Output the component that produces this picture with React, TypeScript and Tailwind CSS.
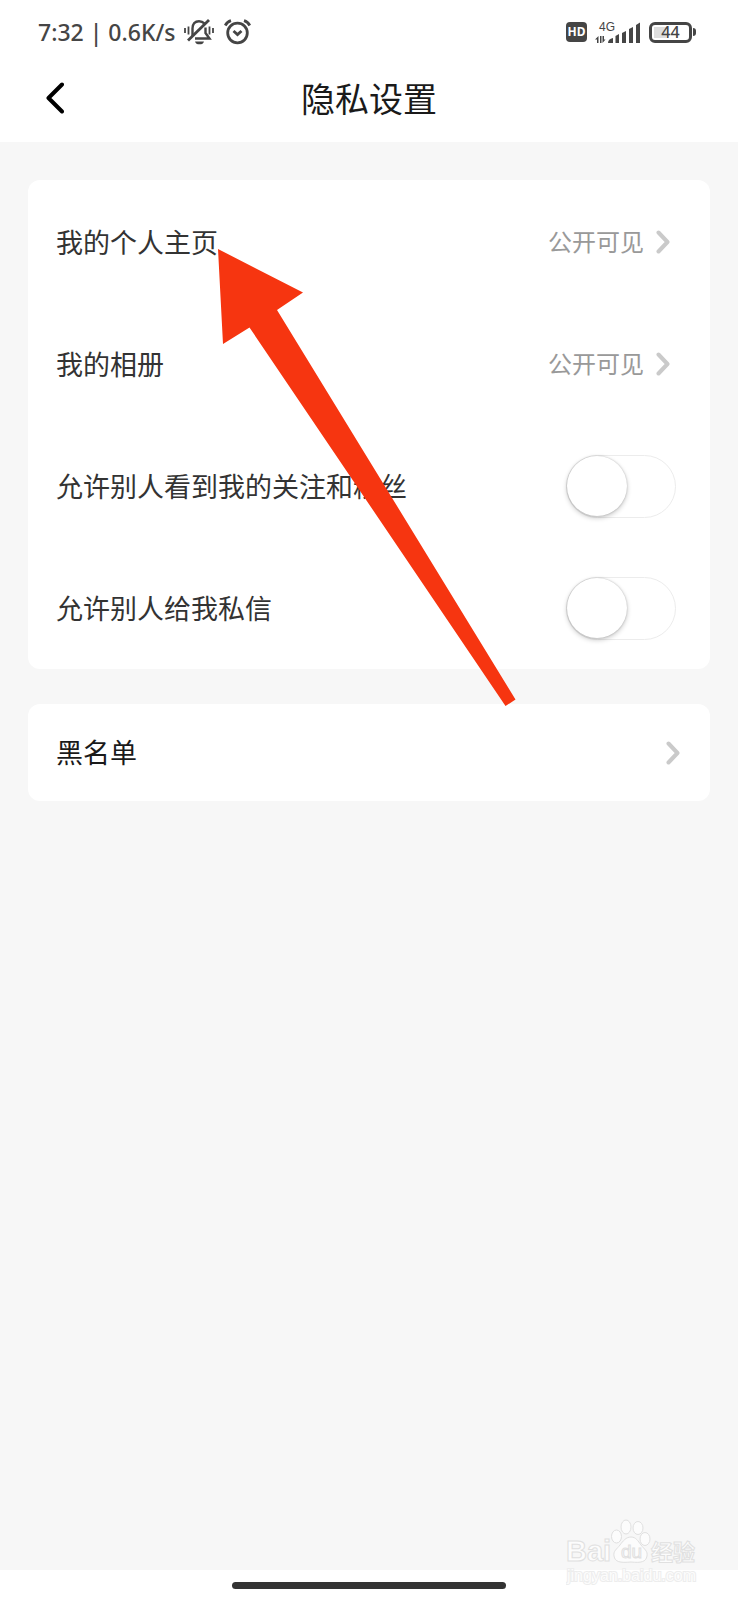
import React, { useState } from "react";

interface LinkRowProps {
  label: string;
  value: string;
}

interface SwitchRowProps {
  id: string;
  label: string;
}

const Chevron = () => (
  <svg width="14" height="24" viewBox="0 0 14 24" fill="none" aria-hidden="true">
    <path
      d="M2.500 2.500L11.500 12L2.500 21.500"
      stroke="#cacaca"
      strokeWidth="4"
      strokeLinecap="round"
      strokeLinejoin="round"
    />
  </svg>
);

const MutedBell = () => (
  <svg width="30" height="26" viewBox="0 0 30 26" fill="none" aria-hidden="true">
    <g stroke="#454545" strokeWidth="2.400">
      <path d="M1 9v5M4.500 7.500v8M25.500 7.500v8M29 9v5" strokeWidth="1.800" />
      <path d="M8.500 17V9.500C8.500 5 11 2.200 15 2.200c2.200 0 4 .8 5.300 2.200M21.500 8.500V14l4 5.500H11" />
      <path d="M25 1L4 21.500" strokeWidth="2.800" />
    </g>
    <path d="M11 22.500h9a4.600 3.600 0 0 1-9 0z" fill="#454545" />
  </svg>
);

const Alarm = () => (
  <svg width="27" height="26" viewBox="0 0 27 26" fill="none" aria-hidden="true">
    <circle cx="13.500" cy="14" r="9.800" stroke="#454545" strokeWidth="2.800" />
    <path
      d="M1.200 6.500Q3.200 2.800 7 1.600M25.800 6.500Q23.800 2.800 20 1.600"
      stroke="#454545"
      strokeWidth="2.800"
    />
    <path d="M9.500 12l4 3.600 4-3.600" stroke="#454545" strokeWidth="2.800" />
  </svg>
);

const Signal = () => (
  <svg width="46" height="28" viewBox="0 0 46 28" fill="#454545" aria-hidden="true">
    <text x="4" y="13" fontSize="12" fontWeight="500" fontFamily="Liberation Sans, sans-serif">
      4G
    </text>
    <path d="M0 21.500L3.500 18v7H2v-3.500zM5 18h1.500v7H5zM7.500 18H9v3.500h1.500L7.500 25z" />
    <path d="M13 25q0-4 5-5v5zM20.500 25v-7l3.500-2v9zM27 25V15l4-2v12zM34 25V11l4-2v16zM41 25V7l4-2.500V25z" />
  </svg>
);

const StatusBar = () => (
  <div className="flex h-14 items-center justify-between pt-2 pr-[42px] pl-[38px] text-[#454545]">
    <div className="flex items-center">
      <span className="text-[23px] leading-6 font-medium">7:32 | 0.6K/s</span>
      <span className="ml-2 flex gap-2.5">
        <MutedBell />
        <Alarm />
      </span>
    </div>
    <div className="flex items-center gap-2">
      <span className="flex h-5 w-[21px] items-center justify-center rounded bg-[#454545] text-[12px] font-bold text-white">
        HD
      </span>
      <Signal />
      <div className="flex items-center gap-px">
        <span className="relative flex h-[21px] w-[43px] items-center justify-center rounded-md border-[3px] border-[#454545] text-[16px] font-medium">
          <span className="absolute inset-y-0.5 left-0.5 w-3 bg-[#dedede]" />
          <span className="relative">44</span>
        </span>
        <span className="h-2 w-[3px] rounded-r-sm bg-[#454545]" />
      </div>
    </div>
  </div>
);

const LinkRow = ({ label, value }: LinkRowProps) => (
  <button
    type="button"
    className="flex h-[122px] w-full items-center justify-between pr-10 pl-7 text-left"
  >
    <span className="pt-0.5 text-[27px] text-[#333333]">{label}</span>
    <span className="flex items-center gap-3">
      <span className="text-[24px] text-[#999999]">{value}</span>
      <Chevron />
    </span>
  </button>
);

const SwitchRow = ({ id, label }: SwitchRowProps) => {
  const [checked, setChecked] = useState(false);

  return (
    <div className="flex h-[122px] items-center justify-between pr-[34px] pl-7">
      <label htmlFor={id} className="pt-0.5 text-[27px] text-[#333333]">
        {label}
      </label>
      <input
        id={id}
        type="checkbox"
        role="switch"
        checked={checked}
        onChange={(e) => setChecked(e.target.checked)}
        className="flex h-[63px] w-[110px] shrink-0 appearance-none items-center rounded-full border border-[#ececec] bg-white before:size-[60px] before:rounded-full before:bg-white before:shadow-[0_2px_5px_rgba(0,0,0,0.22),0_0_2px_rgba(0,0,0,0.22)] checked:justify-end checked:bg-green-500"
      />
    </div>
  );
};

const Pointer = () => (
  <svg
    width="300"
    height="460"
    viewBox="217 248 300 460"
    className="pointer-events-none absolute top-[248px] left-[217px]"
    aria-hidden="true"
  >
    <path
      d="M218 249L303 292.500L277 310L515.500 699.500L505.500 706L249.500 327.500L223 344Z"
      fill="#f63510"
    />
  </svg>
);

const Watermark = () => (
  <svg
    width="136"
    height="68"
    viewBox="0 0 136 68"
    className="pointer-events-none absolute right-9 bottom-[14px]"
    fill="#fcfcfc"
    stroke="#e0e0e0"
    strokeWidth="1"
    aria-hidden="true"
  >
    <g fontFamily="Liberation Sans, Noto Sans CJK SC, sans-serif" fontWeight="700">
      <text x="0" y="43" fontSize="29">
        Bai
      </text>
      <text x="85" y="42" fontSize="22">
        经验
      </text>
    </g>
    <ellipse cx="50.500" cy="18.500" rx="5" ry="6.500" />
    <ellipse cx="60" cy="9" rx="5" ry="7" />
    <ellipse cx="72" cy="10" rx="5" ry="6.500" />
    <ellipse cx="79" cy="21" rx="5" ry="6.500" />
    <path d="M65 19c5 0 7 4 10 8s7 6 6 11c-1 6-6 7-16 6-11 1-16 0-17-6-1-5 3-7 6-11s6-8 11-8z" />
    <text x="55" y="40" fontSize="19" fontFamily="Liberation Sans, sans-serif">
      du
    </text>
    <text
      x="1"
      y="63"
      fontSize="16"
      fontFamily="Liberation Sans, sans-serif"
      strokeWidth="2"
      stroke="#ededed"
      paintOrder="stroke"
    >
      jingyan.baidu.com
    </text>
  </svg>
);

const App = () => {
  return (
    <div
      lang="zh-CN"
      className="relative flex min-h-screen flex-col bg-white font-['Noto_Sans','Noto_Sans_CJK_SC',sans-serif]"
    >
      <header>
        <StatusBar />
        <div className="grid h-[86px] grid-cols-[80px_1fr_80px] items-center">
          <button type="button" aria-label="返回" className="flex pb-0.5 pl-11">
            <svg width="20" height="32" viewBox="0 0 20 32" fill="none" aria-hidden="true">
              <path
                d="M18 2.500L4.500 16L18 29.500"
                stroke="#000000"
                strokeWidth="4"
                strokeLinecap="round"
                strokeLinejoin="round"
              />
            </svg>
          </button>
          <h1 className="text-center text-[34px] text-[#1a1a1a]">隐私设置</h1>
        </div>
      </header>

      <main className="flex flex-1 flex-col gap-[35px] bg-[#f7f7f7] px-7 pt-[38px]">
        <section className="rounded-xl bg-white pt-px">
          <LinkRow label="我的个人主页" value="公开可见" />
          <LinkRow label="我的相册" value="公开可见" />
          <SwitchRow id="show-follows" label="允许别人看到我的关注和粉丝" />
          <SwitchRow id="allow-messages" label="允许别人给我私信" />
        </section>
        <section className="rounded-xl bg-white">
          <button
            type="button"
            className="flex h-[97px] w-full items-center justify-between pr-[30px] pl-7 text-left"
          >
            <span className="pt-0.5 text-[27px] text-[#1a1a1a]">黑名单</span>
            <Chevron />
          </button>
        </section>
      </main>

      <footer className="flex h-[30px] items-center justify-center">
        <span className="h-[7px] w-[37%] rounded-full bg-[#333333]" />
      </footer>

      <Pointer />
      <Watermark />
    </div>
  );
};

export default App;
